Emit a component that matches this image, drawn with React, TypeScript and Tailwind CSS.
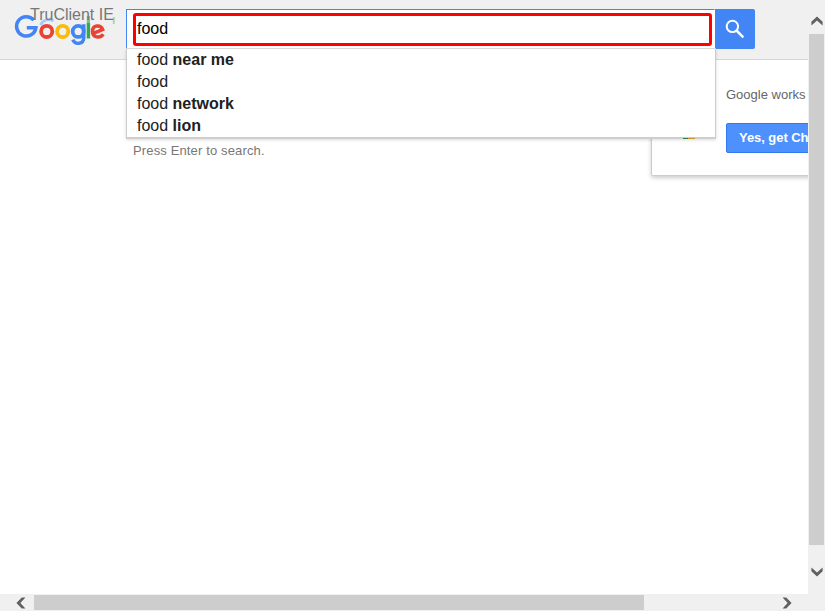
const suggestions = ["near me", "", "network", "lion"];

function GoogleLogo() {
  return (
    <svg width="104" height="36" viewBox="12 12 104 36" fill="none" strokeWidth="3.8">
      <path d="M33.8 20.2A9.7 9.7 0 1 0 35.9 27.7H26.8" stroke="#4285f4" strokeWidth="3.5" />
      <path d="M40.5 25C43 20.3 48 18.3 53.5 20.8" stroke="#a9c8fa" strokeWidth="3" />
      <circle cx="46.7" cy="31.4" r="5.6" stroke="#ea4335" />
      <circle cx="62.7" cy="31.4" r="5.6" stroke="#fbbc05" />
      <circle cx="78.2" cy="31.4" r="5.5" stroke="#4285f4" />
      <path d="M83.8 24.2V37.2C83.8 44.8 74.8 45 72.8 39.7" stroke="#4285f4" strokeWidth="3.4" />
      <path d="M88.4 23V38.5" stroke="#34a853" strokeWidth="3.4" />
      <path d="M88.4 16V23" stroke="#7fc093" strokeWidth="3.2" />
      <path d="M92.8 33.6L102.6 29.5C100.5 24.3 92.5 25 92.5 31.4C92.5 37.6 100 38.9 103.3 34.3" stroke="#ea4335" strokeWidth="3.5" />
      <path d="M113.8 17V24" stroke="#a5d8b2" strokeWidth="2" />
    </svg>
  );
}

function Chevron({ className }: { className: string }) {
  return (
    <svg width="12" height="10" viewBox="0 0 12 10" className={className}>
      <path d="M6 0.4L11.6 5.8V9.4L6 4.4L0.4 9.4V5.8Z" fill="#606060" />
    </svg>
  );
}

function SearchBar() {
  return (
    <div className="relative flex h-10 w-[629px]">
      <div className="h-10 w-[589px] border border-[#4285f4] border-r-white bg-white pt-[3px] pl-1.5">
        <div className="flex h-[33px] w-[579px] items-center rounded-[3px] border-[3px] border-[#ff0000] pb-px pl-px text-[16px] text-black">
          food
        </div>
      </div>
      <div className="flex h-10 w-10 items-center justify-center rounded-r-[2px] bg-[#4285f4]">
        <svg width="20" height="20" viewBox="0 0 20 20" fill="none" stroke="white">
          <circle cx="7.4" cy="7.4" r="5.7" strokeWidth="2" />
          <path d="M11.5 11.5L18.3 18.3" strokeWidth="2.5" />
        </svg>
      </div>
      <div className="absolute top-[39px] left-0 z-10 h-[90px] w-[590px] border border-[#ccc] border-t-[#d9d9d9] bg-white shadow-[0_1px_0_#d0d0d0,0_2px_3px_rgba(0,0,0,0.15)]">
        {suggestions.map((s, i) => (
          <div key={i} className="h-[22px] pl-2.5 text-[16px] leading-[22px] text-[#212121]">
            food <b>{s}</b>
          </div>
        ))}
      </div>
    </div>
  );
}

function ChromePromo() {
  return (
    <div className="relative ml-[651px] h-[116px] w-[240px] shrink-0 rounded-b-[2px] border border-t-0 border-[#ccc] bg-white pt-[27px] pl-[74px] text-[13px] shadow-[0_2px_4px_rgba(0,0,0,0.2)]">
      <div className="leading-4 whitespace-nowrap text-[#666]">Google works</div>
      <div className="mt-5 flex h-[30px] w-[140px] items-center rounded-[2px] border border-[#3079ed] bg-[#4d90fe] pl-3 font-bold whitespace-nowrap text-white">
        <span className="tracking-[-0.06px]">Yes, get Ch</span>
      </div>
      <svg className="absolute top-[78px] left-[31px] z-20" width="12" height="1">
        <path d="M0 .5H5" stroke="#238846" />
        <path d="M5 .5H12" stroke="#c4942f" />
      </svg>
    </div>
  );
}

export default function App() {
  return (
    <div className="grid h-[611px] w-[825px] grid-cols-[808px_17px] grid-rows-[594px_17px] overflow-hidden bg-[#f0f0f0] font-['Liberation_Sans',Arial,sans-serif]">
      <main className="overflow-hidden bg-white">
        <header className="flex h-[60px] border-b border-[#d5d5d5] bg-[#f0f0f0] pt-[9px] pl-3">
          <div className="relative mt-[3px] w-[114px] shrink-0">
            <GoogleLogo />
            <span className="absolute -top-[6px] left-[18px] text-[16px] leading-[18px] whitespace-nowrap text-[#777]">TruClient IE</span>
          </div>
          <SearchBar />
        </header>
        <div className="grid">
          <div className="col-start-1 row-start-1 pt-[83px] pl-[133px] text-[13px] leading-4 tracking-[0.14px] text-[#777]">Press Enter to search.</div>
          <div className="col-start-1 row-start-1 overflow-hidden pb-2">
            <ChromePromo />
          </div>
        </div>
      </main>
      <aside className="flex flex-col items-center">
        <Chevron className="mt-4 shrink-0" />
        <div className="mt-2 h-[511px] w-[15px] shrink-0 bg-[#cdcdcd]" />
        <Chevron className="mt-[22px] shrink-0 rotate-180" />
      </aside>
      <footer className="flex items-center pl-[15px]">
        <Chevron className="-rotate-90" />
        <div className="ml-[7px] h-[15px] w-[610px] bg-[#cdcdcd]" />
        <Chevron className="ml-[137px] rotate-90" />
      </footer>
    </div>
  );
}
